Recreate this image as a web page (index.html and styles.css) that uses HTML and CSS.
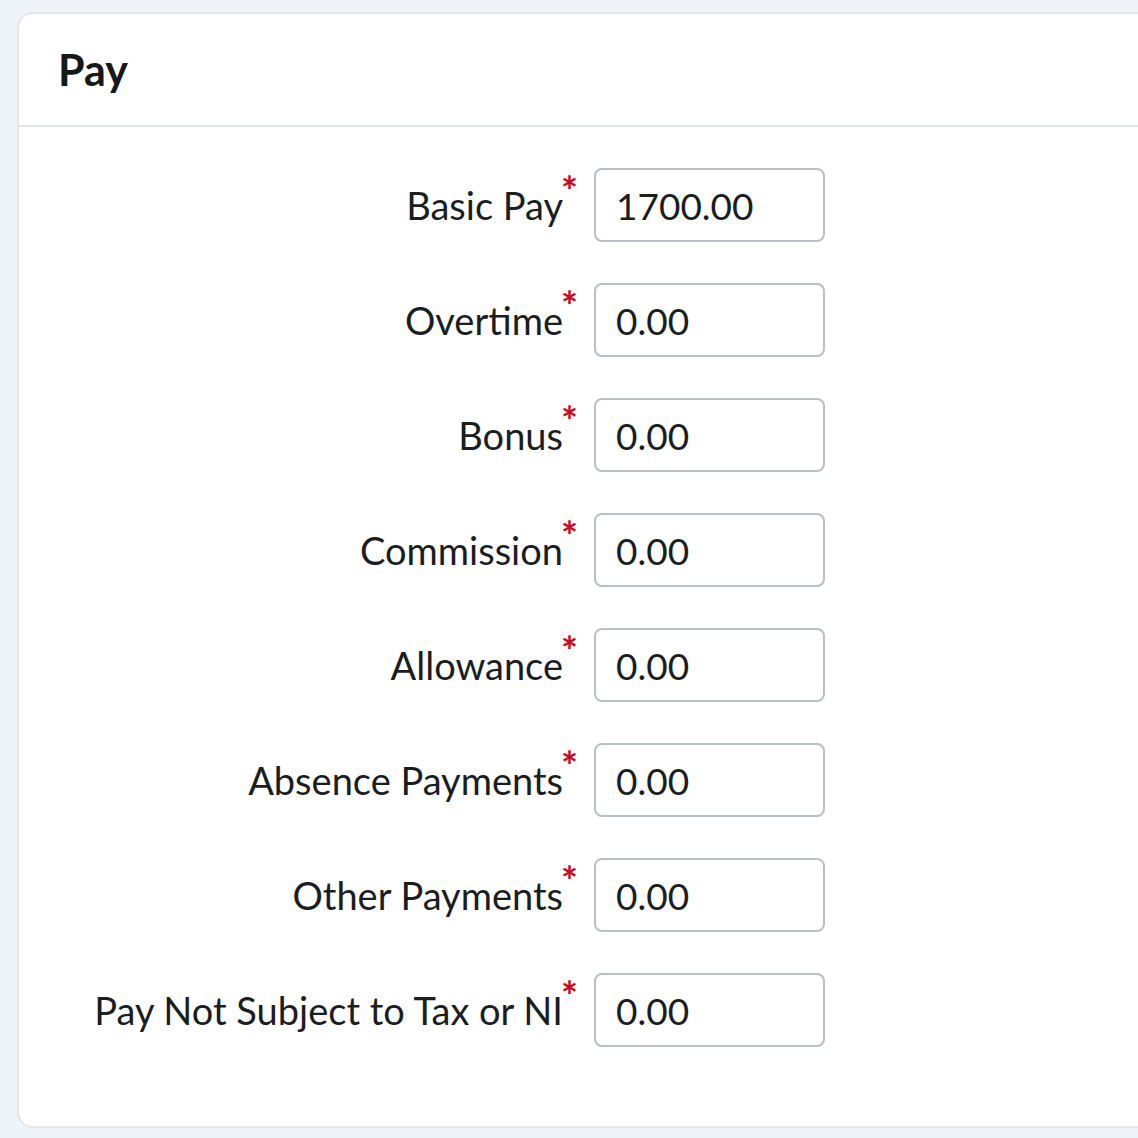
FILE: index.html
```html
<!DOCTYPE html>
<html>
<head>
<meta charset="utf-8">
<link rel="stylesheet" href="styles.css">
</head>
<body>
<div class="card">
  <div class="card-header"><h2 class="title">Pay</h2></div>
  <div class="card-body">
    <div class="form-grid">
      <label class="field-label">Basic Pay<span class="req">*</span></label>
      <input class="field-input" type="text" value="1700.00">
      <label class="field-label">Overtime<span class="req">*</span></label>
      <input class="field-input" type="text" value="0.00">
      <label class="field-label">Bonus<span class="req">*</span></label>
      <input class="field-input" type="text" value="0.00">
      <label class="field-label">Commission<span class="req">*</span></label>
      <input class="field-input" type="text" value="0.00">
      <label class="field-label">Allowance<span class="req">*</span></label>
      <input class="field-input" type="text" value="0.00">
      <label class="field-label">Absence Payments<span class="req">*</span></label>
      <input class="field-input" type="text" value="0.00">
      <label class="field-label">Other Payments<span class="req">*</span></label>
      <input class="field-input" type="text" value="0.00">
      <label class="field-label">Pay Not Subject to Tax or NI<span class="req">*</span></label>
      <input class="field-input" type="text" value="0.00">
    </div>
  </div>
</div>
</body>
</html>
```
FILE: styles.css
```css
html, body {
  margin: 0;
  padding: 0;
  background: #eff4fa;
  overflow: hidden;
  font-family: Lato, "Noto Sans", sans-serif;
  color: #1b1d1f;
}
body {
  padding: 12px 0 0 17px;
}
.card {
  width: 1200px;
  background: #fff;
  border: 2px solid #e2e6ea;
  border-radius: 16px 0 0 16px;
}
.card-header {
  height: 111px;
  display: flex;
  align-items: center;
  padding-left: 39px;
  border-bottom: 2px solid #e2e6ea;
}
.title {
  margin: 0;
  font-size: 43px;
  font-weight: 700;
  color: #16181a;
}
.card-body {
  padding: 41px 0 79px 0;
}
.form-grid {
  display: grid;
  grid-template-columns: 559px 231px;
  column-gap: 16px;
  row-gap: 41px;
  align-items: center;
}
.field-label {
  text-align: right;
  font-size: 38px;
  line-height: 40px;
  white-space: nowrap;
}
.req {
  display: inline-block;
  color: #d0021b;
  font-size: 40px;
  font-weight: 700;
  line-height: 1;
  position: relative;
  top: -14px;
  margin-left: -2px;
  vertical-align: top;
}
.field-input {
  box-sizing: border-box;
  width: 231px;
  height: 74px;
  border: 2px solid #b8c0c6;
  border-radius: 8px;
  padding: 0 0 0 20px;
  font-family: inherit;
  font-size: 37px;
  color: #1b1d1f;
  background: #fff;
  outline: none;
}
```
